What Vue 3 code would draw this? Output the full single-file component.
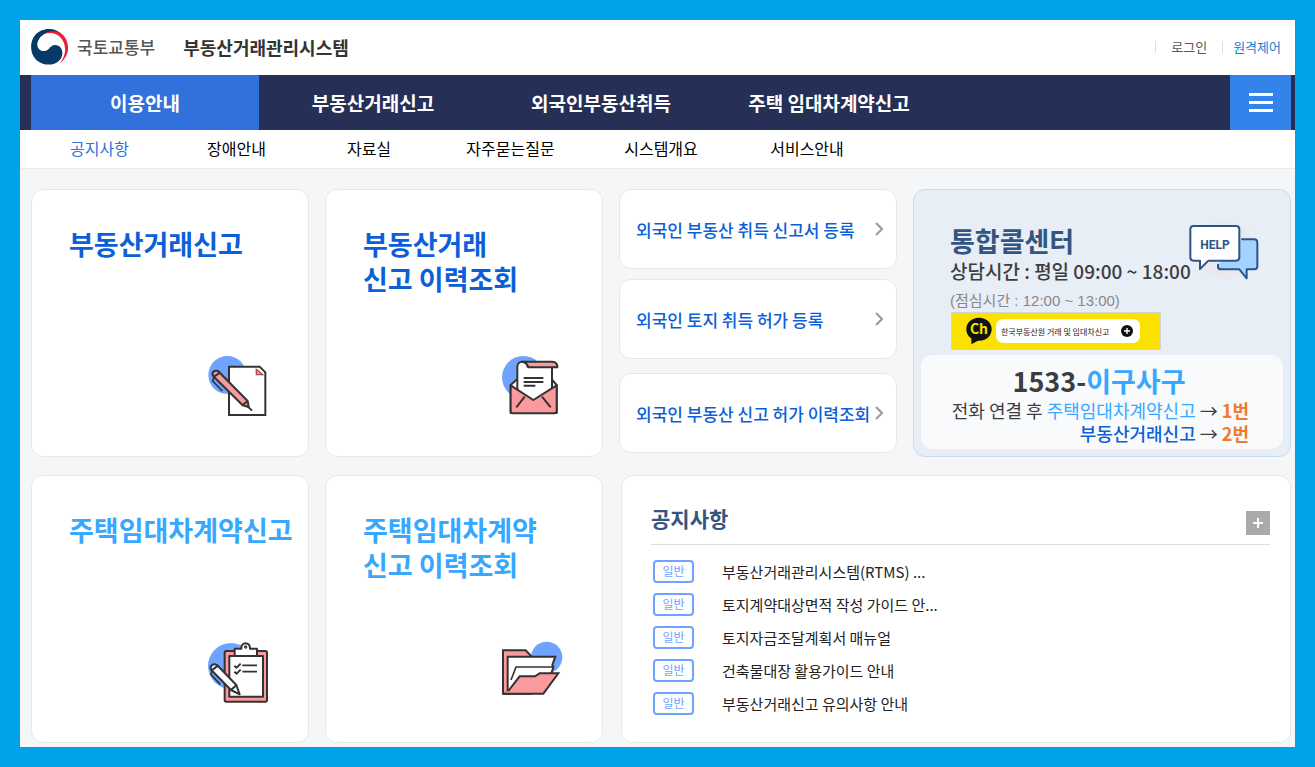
<script setup>
import { ref } from 'vue';

const mainMenu = ['이용안내', '부동산거래신고', '외국인부동산취득', '주택 임대차계약신고'];
const activeMenu = ref(0);

const subMenu = ['공지사항', '장애안내', '자료실', '자주묻는질문', '시스템개요', '서비스안내'];
const activeSub = ref(0);

const foreignLinks = [
  '외국인 부동산 취득 신고서 등록',
  '외국인 토지 취득 허가 등록',
  '외국인 부동산 신고 허가 이력조회'
];

const notices = [
  '부동산거래관리시스템(RTMS) ...',
  '토지계약대상면적 작성 가이드 안...',
  '토지자금조달계획서 매뉴얼',
  '건축물대장 활용가이드 안내',
  '부동산거래신고 유의사항 안내'
];
</script>

<template>
  <div class="page">
    <header class="header">
      <a href="#" class="logo">
        <svg class="emblem" viewBox="0 0 114 108" aria-hidden="true">
          <path d="M16 19C32-3 72-7 97 19C119 44 117 84 82 106C108 81 108 46 88 25C69 7 42 9 27 25C20 33 18 40 20 47Z" fill="#f01e3c" />
          <path d="M88 13C66-7 31-3 12 19C-6 41-3 78 20 96C40 112 72 110 87 92C98 78 96 57 82 50C68 44 60 51 54 59C46 68 31 69 24 60C15 49 18 33 32 20C48 6 70 3 88 13Z" fill="#063a66" />
        </svg>
        <span class="ministry">국토교통부</span>
      </a>
      <h1 class="site-name">부동산거래관리시스템</h1>
      <ul class="util">
        <li><a href="#">로그인</a></li>
        <li><a href="#" class="remote">원격제어</a></li>
      </ul>
    </header>

    <nav class="main-nav">
      <ul>
        <li v-for="(item, i) in mainMenu" :key="item">
          <a href="#" :class="{ active: i === activeMenu }" @click.prevent="activeMenu = i">{{ item }}</a>
        </li>
      </ul>
      <button type="button" class="all-menu" aria-label="전체메뉴">
        <span></span>
        <span></span>
        <span></span>
      </button>
    </nav>

    <nav class="sub-nav">
      <a
        v-for="(item, i) in subMenu"
        :key="item"
        href="#"
        :class="{ active: i === activeSub }"
        @click.prevent="activeSub = i"
      >{{ item }}</a>
    </nav>

    <main class="board">
      <a href="#" class="card menu-card">
        <strong>부동산거래신고</strong>
        <svg viewBox="0 0 270 240" fill="none" stroke="#333" stroke-width="6" aria-hidden="true">
          <circle cx="97" cy="90" r="57" fill="#6fa3ff" stroke="none" />
          <path d="M102 65H194L211 82V210H102Z" fill="#fff" />
          <path d="M184 73V89H203Z" fill="#fb9a9d" stroke="#a84a50" stroke-width="4" />
          <path d="M55 94C48 83 57 74 69 78L158 168L161 186L143 181Z" fill="#fb9a9d" stroke-linejoin="round" />
          <path d="M57 95L76 82M142 181L158 168M158 184L171 197" />
          <path d="M57 96L53 108L82 138" stroke-width="5" />
        </svg>
      </a>

      <a href="#" class="card menu-card">
        <strong>부동산거래<br />신고 이력조회</strong>
        <svg viewBox="-3 0 270 240" fill="none" stroke="#333" stroke-width="6" stroke-linejoin="round" aria-hidden="true">
          <circle cx="100" cy="97" r="64" fill="#6fa3ff" stroke="none" />
          <path d="M62 120L82 102H184L200 120V204H62Z" fill="#fff" />
          <path d="M82 144V65C82 45 111 45 113 65H186V144L131 176Z" fill="#fff" />
          <path d="M96 50H187C199 50 202 58 202 67H115C112 56 106 51 96 50Z" fill="#fb9a9d" />
          <path d="M62 121L130 165L200 121V198Q200 205 193 205H69Q62 205 62 198Z" fill="#fb9a9d" />
          <path d="M79 187L104 155M182 187L156 155M101 99H160M101 111H160M101 122H136" />
        </svg>
      </a>

      <div class="link-list">
        <a v-for="link in foreignLinks" :key="link" href="#" class="card link-card">
          <span>{{ link }}</span>
          <svg viewBox="0 0 8 14" aria-hidden="true">
            <path d="M1 1L7 7L1 13" fill="none" stroke="#999" stroke-width="2" />
          </svg>
        </a>
      </div>

      <section class="card call-center">
        <div class="call-top">
          <div class="call-text">
            <h2>통합콜센터</h2>
            <p class="hours">상담시간 : 평일 09:00 ~ 18:00</p>
            <p class="lunch">(점심시간 : 12:00 ~ 13:00)</p>
          </div>
          <svg class="help" viewBox="30 15 210 180" fill="none" stroke="#2c548a" stroke-width="6" stroke-linejoin="round" aria-hidden="true">
            <circle cx="140" cy="105" r="87" fill="#e8eaed" stroke="none" />
            <path d="M117 149V155Q117 163 126 163H181L203 190V163H226Q235 163 235 154V83Q235 73 225 73H189" fill="#a3d2ff" stroke-linecap="round" />
            <path d="M44 33H171Q181 33 181 43V127Q181 137 171 137H88L63 162V137H44Q34 137 34 127V43Q34 33 44 33Z" fill="#fff" />
            <text x="108" y="101" text-anchor="middle">HELP</text>
          </svg>
        </div>

        <a href="#" class="kakao">
          <svg viewBox="0 0 78 84" aria-hidden="true">
            <path d="M39 2C17 2 1 17 1 36C1 50 8 59 16 64V82L36 71C61 73 77 56 77 36C77 17 61 2 39 2Z" fill="#111" />
            <text x="39" y="51" text-anchor="middle" fill="#fae100">Ch</text>
          </svg>
          <span class="pill">
            <span>한국부동산원 거래 및 임대차신고</span>
            <svg viewBox="0 0 12 12" aria-hidden="true">
              <circle cx="6" cy="6" r="6" fill="#111" />
              <path d="M3 6H9M6 3V9" stroke="#fff" stroke-width="1.4" />
            </svg>
          </span>
        </a>

        <div class="phone">
          <p class="number">1533-<span class="sky">이구사구</span></p>
          <p class="guide">전화 연결 후 <span class="sky">주택임대차계약신고</span> → <b>1번</b></p>
          <p class="guide"><span class="blue">부동산거래신고</span> → <b>2번</b></p>
        </div>
      </section>

      <a href="#" class="card menu-card light">
        <strong>주택임대차계약신고</strong>
        <svg viewBox="0 3 270 240" fill="none" stroke="#333" stroke-width="6" stroke-linejoin="round" aria-hidden="true">
          <circle cx="108" cy="108" r="69" fill="#6fa3ff" stroke="none" />
          <rect x="89" y="63" width="127" height="152" rx="5" fill="#fb9a9d" />
          <path d="M103 78H204V200H103Z" fill="#fff" />
          <path d="M119 78V56H139C137 34 166 34 165 56H186V78Z" fill="#fff" />
          <circle cx="152" cy="51" r="3" stroke-width="4" />
          <path d="M142 106H186M142 125H186" stroke-width="5" />
          <path d="M118 107L125 113L137 101M118 125L125 131L137 119" />
          <path d="M49 120C42 109 54 98 66 105L124 165L134 193L108 180Z" fill="#fff" />
          <path d="M50 121L69 107M108 180L124 166" />
          <path d="M51 121L48 134L76 163" stroke-width="5" />
        </svg>
      </a>

      <a href="#" class="card menu-card light">
        <strong>주택임대차계약<br />신고 이력조회</strong>
        <svg viewBox="-3 3 270 240" fill="none" stroke="#333" stroke-width="6" aria-hidden="true">
          <circle cx="170" cy="82" r="47" fill="#6fa3ff" stroke="none" />
          <path d="M39 191V61H107L125 80V191Z" fill="#fb9a9d" />
          <path d="M53 184V80H196L187 105L190 112L182 136L90 190Z" fill="#fff" />
          <path d="M63 150L78 111H190" stroke-width="5" />
          <path d="M39 191H160L205 130H149L135 139H89L55 183" fill="#fb9a9d" />
        </svg>
      </a>

      <section class="card notice">
        <div class="notice-head">
          <h2>공지사항</h2>
          <button type="button" aria-label="공지사항 더보기">
            <svg viewBox="0 0 24 24" aria-hidden="true">
              <path d="M7 12H17M12 7V17" stroke="#fff" stroke-width="2" />
            </svg>
          </button>
        </div>
        <ul>
          <li v-for="notice in notices" :key="notice">
            <span class="badge">일반</span>
            <a href="#">{{ notice }}</a>
          </li>
        </ul>
      </section>
    </main>
  </div>
</template>

<style>
body {
  background-color: #00a2e8;
}
</style>

<style scoped>
.page {
  margin: 20px;
  background-color: #f5f6f8;
  color: #222;
  font-family: "Noto Sans CJK KR", "Noto Sans", sans-serif;
}

.page * {
  box-sizing: border-box;
}

a {
  color: inherit;
  text-decoration: none;
}

ul {
  list-style: none;
  margin: 0;
  padding: 0;
}

h1,
h2,
p {
  margin: 0;
}

button {
  border: none;
  padding: 0;
  cursor: pointer;
}

.header {
  display: flex;
  align-items: center;
  height: 55px;
  padding: 0 14px 2px 11px;
  background-color: #fff;
}

.logo {
  display: flex;
  align-items: center;
  gap: 8px;
}

.emblem {
  width: 38px;
  height: 36px;
}

.ministry {
  color: #555;
  font-size: 17px;
  font-weight: 500;
}

.site-name {
  margin-left: 28px;
  color: #333;
  font-size: 18px;
  font-weight: 700;
}

.util {
  display: flex;
  margin-left: auto;
  color: #555;
  font-size: 13px;
  line-height: 12px;
}

.util li {
  padding: 0 15px;
  border-left: 1px solid #ddd;
}

.util li:last-child {
  padding: 0 0 0 10px;
}

.remote {
  color: #0f7fd0;
}

.main-nav {
  display: flex;
  justify-content: space-between;
  height: 55px;
  padding: 0 4px 0 11px;
  background-color: #262f55;
}

.main-nav ul {
  display: flex;
}

.main-nav a {
  display: block;
  width: 228px;
  color: #fff;
  font-size: 19px;
  font-weight: 700;
  line-height: 55px;
  text-align: center;
}

.main-nav a.active {
  background-color: #3071dc;
}

.all-menu {
  display: flex;
  flex-direction: column;
  align-items: center;
  justify-content: center;
  gap: 5px;
  width: 61px;
  background-color: #3383ea;
}

.all-menu span {
  width: 24px;
  height: 3px;
  background-color: #fff;
}

.sub-nav {
  display: grid;
  grid-template-columns: 137px 137px 128px 155px 146px 146px;
  padding: 0 0 2px 11px;
  border-bottom: 1px solid #eaebed;
  background-color: #fff;
  color: #000;
  font-size: 16px;
  line-height: 36px;
  text-align: center;
}

.sub-nav .active {
  color: #3071dc;
}

.board {
  display: grid;
  grid-template-columns: minmax(0, 278fr) minmax(0, 278fr) minmax(0, 278fr) minmax(0, 378fr);
  grid-auto-rows: minmax(268px, auto);
  gap: 18px 16px;
  padding: 20px 4px 4px 11px;
}

.card {
  border: 1px solid #e7e8ea;
  border-radius: 12px;
  background-color: #fff;
}

.menu-card {
  display: flex;
  flex-direction: column;
  justify-content: space-between;
  padding: 36px 0 31px 37px;
  color: #0c5fd8;
}

.menu-card strong {
  font-size: 27px;
  font-weight: 700;
  line-height: 35px;
  white-space: nowrap;
}

.menu-card svg {
  align-self: flex-end;
  width: 90px;
  height: 80px;
  margin-right: 23px;
}

.light {
  color: #38a8ff;
}

.link-list {
  display: flex;
  flex-direction: column;
  gap: 10px;
}

.link-card {
  display: flex;
  align-items: center;
  justify-content: space-between;
  height: 80px;
  padding: 0 13px 0 16px;
  color: #0c5fd8;
  font-size: 17px;
  font-weight: 500;
  white-space: nowrap;
}

.link-card:last-child {
  margin-top: 4px;
}

.link-card svg {
  width: 8px;
  height: 14px;
}

.call-center {
  display: flex;
  flex-direction: column;
  padding: 30px 7px 7px;
  border-color: #cbdbec;
  background-color: #e7eef6;
}

.call-top {
  display: flex;
  justify-content: space-between;
  padding: 0 24px 0 29px;
}

.call-text {
  min-width: 0;
  white-space: nowrap;
}

.call-text h2 {
  padding-top: 5px;
  color: #34557f;
  font-size: 27px;
  font-weight: 700;
  line-height: 32px;
}

.hours {
  color: #3d3d3d;
  font-size: 19px;
  font-weight: 500;
  line-height: 28px;
}

.lunch {
  padding-top: 2px;
  color: #888;
  font-family: "Liberation Sans", "Noto Sans CJK KR", sans-serif;
  font-size: 15px;
  line-height: 28px;
}

.help {
  flex: none;
  width: 70px;
  height: 60px;
}

.help text {
  fill: #2c548a;
  stroke: none;
  font-family: Roboto, "Noto Sans CJK KR", sans-serif;
  font-size: 36px;
  font-weight: 700;
}

.kakao {
  display: flex;
  align-items: center;
  align-self: flex-start;
  gap: 4px;
  width: 210px;
  height: 38px;
  margin: -3px 0 0 30px;
  padding-left: 14px;
  border: 1px solid #d3d3d3;
  background-color: #fae100;
}

.kakao > svg {
  width: 26px;
  height: 28px;
}

.kakao text {
  font-family: "Noto Sans CJK KR", sans-serif;
  font-size: 42px;
  font-weight: 700;
}

.pill {
  display: flex;
  align-items: center;
  justify-content: space-between;
  width: 144px;
  height: 24px;
  padding: 0 7px 0 5px;
  border-radius: 7px;
  background-color: #fff;
  color: #222;
  font-size: 8px;
  white-space: nowrap;
}

.pill svg {
  width: 12px;
  height: 12px;
}

.phone {
  margin-top: auto;
  padding: 8px 34px 4px 0;
  border-radius: 12px;
  background-color: #f9fafc;
  color: #3d3d3d;
  text-align: right;
}

.number {
  padding-left: 28px;
  font-size: 27px;
  font-weight: 700;
  line-height: 36px;
  text-align: center;
}

.guide {
  font-size: 18px;
  line-height: 23px;
  white-space: nowrap;
}

.guide b {
  color: #ef7c2d;
  font-weight: 700;
}

.sky {
  color: #38a8ff;
}

.blue {
  color: #0c5fd8;
}

.guide .blue {
  font-weight: 500;
}

.notice {
  grid-column: span 2;
  margin-left: 2px;
  padding: 25px 20px 0 29px;
}

.notice-head {
  display: flex;
  align-items: flex-end;
  justify-content: space-between;
  padding-bottom: 9px;
  border-bottom: 1px solid #ddd;
}

.notice-head h2 {
  align-self: flex-start;
  color: #34557f;
  font-size: 21px;
  font-weight: 700;
  line-height: 34px;
}

.notice-head button {
  width: 24px;
  height: 24px;
  background-color: #aaa;
}

.notice-head svg {
  display: block;
}

.notice ul {
  padding: 10px 0 0 2px;
}

.notice li {
  display: flex;
  align-items: center;
  gap: 28px;
  height: 33px;
  font-size: 15px;
}

.badge {
  width: 41px;
  height: 23px;
  border: 2px solid #6fa3ff;
  border-radius: 4px;
  color: #6fa3ff;
  font-size: 12px;
  line-height: 18px;
  text-align: center;
}
</style>
